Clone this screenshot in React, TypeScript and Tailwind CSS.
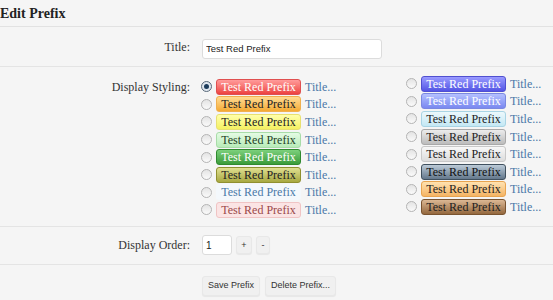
import React from 'react';

const serif = { fontFamily: '"Liberation Serif", "DejaVu Serif", serif' };
const sans = { fontFamily: '"Liberation Sans", Arial, sans-serif' };

interface Styling {
  id: string;
  className: string;
}

const left: Styling[] = [
  { id: 'red', className: 'bg-gradient-to-b from-[#ff9a9a] to-[#ec4040] border-[#e05050] text-white' },
  { id: 'orange', className: 'bg-gradient-to-b from-[#ffdc90] to-[#f4aa30] border-[#f0b050] text-[#222]' },
  { id: 'yellow', className: 'bg-gradient-to-b from-[#ffffa8] to-[#f4f060] border-[#e8e070] text-[#222]' },
  { id: 'lightGreen', className: 'bg-gradient-to-b from-[#e4fbe4] to-[#b8ecb8] border-[#a8dca8] text-[#1f3f1f]' },
  { id: 'green', className: 'bg-gradient-to-b from-[#7cd07c] to-[#3a9c3a] border-[#2f8a2f] text-white' },
  { id: 'olive', className: 'bg-gradient-to-b from-[#e0e090] to-[#a8a840] border-[#909030] text-[#222]' },
  { id: 'plain', className: 'bg-[#f4f8fc] border-transparent text-[#4a78a8]' },
  { id: 'pink', className: 'bg-[#fbe4e4] border-[#f0c4c4] text-[#9a4848]' },
];

const right: Styling[] = [
  { id: 'blue', className: 'bg-gradient-to-b from-[#9a9aff] to-[#5454e4] border-[#5050d0] text-white' },
  { id: 'lightBlue', className: 'bg-gradient-to-b from-[#b4c0ff] to-[#7a88f0] border-[#7a88e0] text-white' },
  { id: 'cyan', className: 'bg-gradient-to-b from-[#ecf8fc] to-[#c4e8f4] border-[#a8d4e4] text-[#222]' },
  { id: 'gray', className: 'bg-gradient-to-b from-[#ececec] to-[#bcbcbc] border-[#a8a8a8] text-[#222]' },
  { id: 'lightGray', className: 'bg-gradient-to-b from-[#f8f8f8] to-[#dcdcdc] border-[#c8c8c8] text-[#222]' },
  { id: 'slate', className: 'bg-gradient-to-b from-[#bccbd8] to-[#64788c] border-[#40505e] text-[#111]' },
  { id: 'lightOrange', className: 'bg-gradient-to-b from-[#ffe2b0] to-[#f4b464] border-[#e8a450] text-[#222]' },
  { id: 'brown', className: 'bg-gradient-to-b from-[#dcb894] to-[#94683e] border-[#7a5430] text-[#222]' },
];

const Radio: React.FC<{ checked?: boolean }> = ({ checked }) => (
  <span
    className={`w-[11px] h-[11px] rounded-full border shrink-0 flex items-center justify-center ${
      checked ? 'border-[#5a6a7a] bg-[#dfe6ee]' : 'border-[#b4b4b4] bg-gradient-to-b from-[#e4e4e4] to-[#fafafa]'
    }`}
  >
    {checked && <span className="w-[5px] h-[5px] rounded-full bg-[#1c3c5c]" />}
  </span>
);

const Option: React.FC<{ s: Styling; checked?: boolean }> = ({ s, checked }) => (
  <div className="flex items-center h-[17.6px]">
    <Radio checked={checked} />
    <span
      className={`ml-[4px] w-[85px] h-[16px] flex items-center justify-center rounded-[3px] border text-[12px] leading-none whitespace-nowrap ${s.className}`}
      style={serif}
    >
      Test Red Prefix
    </span>
    <span className="ml-[4px] text-[12px] text-[#4a78a8] whitespace-nowrap" style={serif}>
      Title...
    </span>
  </div>
);

const Row: React.FC<{ label: string; children: React.ReactNode; className?: string }> = ({ label, children, className }) => (
  <div className={`flex border-b border-[#e4e4e4] ${className ?? ''}`}>
    <div className="w-[190px] shrink-0 text-right text-[12px] text-[#333]" style={serif}>
      {label}
    </div>
    <div className="ml-[12px] flex-1">{children}</div>
  </div>
);

const btn =
  'bg-[#f0f0f0] border border-[#e8e8e8] rounded-[3px] text-[9px] text-[#333] leading-none shadow-[0_1px_1px_rgba(0,0,0,0.06)]';

export default function App() {
  return (
    <div className="w-[553px] h-[300px] bg-[#f5f5f5] overflow-hidden">
      <div className="h-[27px] border-b border-[#e2e2e2] flex items-center">
        <h2 className="text-[14px] font-bold text-[#222]" style={serif}>
          Edit Prefix
        </h2>
      </div>

      <Row label="Title:" className="h-[40px] items-center">
        <input
          readOnly
          value="Test Red Prefix"
          className="w-[180px] h-[20px] bg-white border border-[#dcdcdc] rounded-[3px] px-[3px] text-[9.5px] text-[#222] outline-none"
          style={sans}
        />
      </Row>

      <Row label="Display Styling:" className="pt-[11px] pb-[7px]">
        <div className="flex -ml-[1px]">
          <div className="w-[205px] flex flex-col">
            {left.map((s, i) => (
              <Option key={s.id} s={s} checked={i === 0} />
            ))}
          </div>
          <div className="flex flex-col -mt-[3px]">
            {right.map((s) => (
              <Option key={s.id} s={s} />
            ))}
          </div>
        </div>
      </Row>

      <Row label="Display Order:" className="h-[38px] items-center">
        <div className="flex items-center gap-[4px]">
          <input
            readOnly
            value="1"
            className="w-[30px] h-[20px] bg-white border border-[#dcdcdc] rounded-[3px] px-[3px] text-[10px] text-[#222] outline-none"
            style={sans}
          />
          <button className={`w-[16px] h-[18px] ${btn}`} style={sans}>
            +
          </button>
          <button className={`w-[14px] h-[18px] ${btn}`} style={sans}>
            -
          </button>
        </div>
      </Row>

      <div className="flex pt-[11px]">
        <div className="w-[202px] shrink-0" />
        <div className="flex gap-[5px]">
          <button className={`h-[20px] px-[5px] ${btn}`} style={sans}>
            Save Prefix
          </button>
          <button className={`h-[20px] px-[5px] ${btn}`} style={sans}>
            Delete Prefix...
          </button>
        </div>
      </div>
    </div>
  );
}
